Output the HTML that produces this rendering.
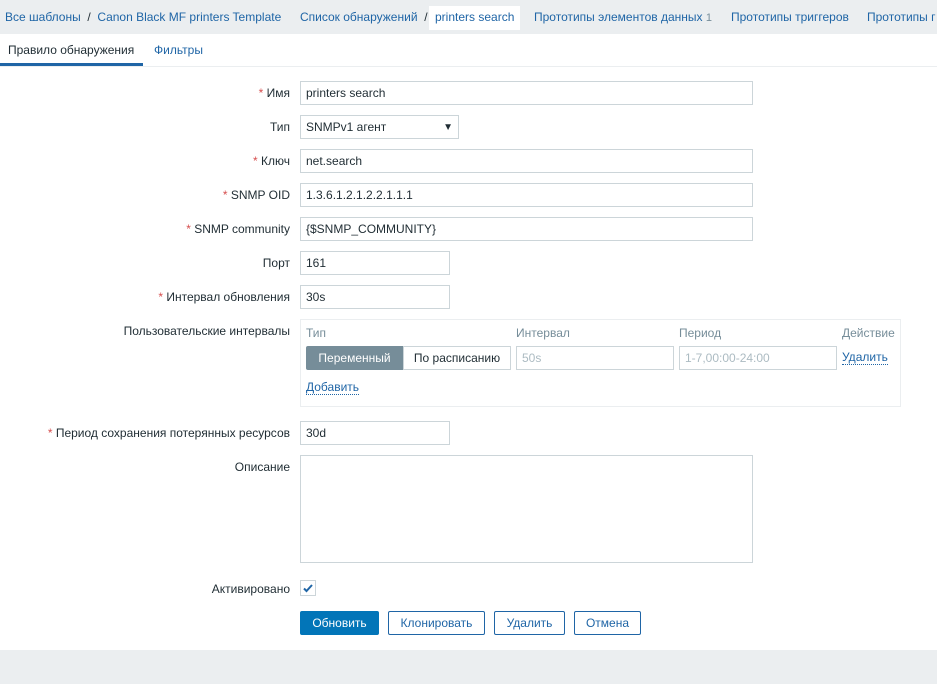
<!DOCTYPE html>
<html><head><meta charset="utf-8"><style>
*{box-sizing:border-box;margin:0;padding:0}
body{width:937px;height:684px;position:relative;background:#fff;font:12px "Liberation Sans",Arial,sans-serif;color:#1f2c33;overflow:hidden}
.a{position:absolute}
.top{left:0;top:0;width:937px;height:34px;background:#ebeef0;white-space:nowrap}
.top span{position:absolute;top:10px;color:#1f65a6}
.lnk{color:#1f65a6}
.lbl{position:absolute;right:647px;text-align:right;white-space:nowrap}
.st{color:#d64e4e}
.in{position:absolute;left:300px;height:24px;border:1px solid #ccd5d9;background:#fff;padding:4px 5px;white-space:nowrap}
.btn{position:absolute;top:611px;height:24px;border:1px solid #1f65a6;color:#1f65a6;text-align:center;line-height:22px;border-radius:2px;background:#fff}
.ul{border-bottom:1px dotted #1f65a6}
.gray{color:#768d99}
</style></head><body>
<div class="a top">
<span style="left:5px">Все шаблоны <span style="position:static;color:#1f2c33">&nbsp;/&nbsp;</span> Canon Black MF printers Template</span>
<span style="left:300px">Список обнаружений <span style="position:static;color:#1f2c33">&nbsp;/</span></span>
<div class="a" style="left:429px;top:6px;width:91px;height:24px;background:#fff"></div>
<span style="left:435px">printers search</span>
<span style="left:534px">Прототипы элементов данных <span style="position:static;color:#768d99;font-size:11px">1</span></span>
<span style="left:731px">Прототипы триггеров</span>
<span style="left:867px">Прототипы г</span>
</div>
<div class="a" style="left:0;top:66px;width:937px;height:1px;background:#ebeef0"></div>
<div class="a" style="left:8px;top:43px">Правило обнаружения</div>
<div class="a" style="left:0;top:63px;width:143px;height:3px;background:#1f65a6"></div>
<div class="a lnk" style="left:154px;top:43px">Фильтры</div>

<div class="lbl" style="top:86px"><span class="st">*</span> Имя</div>
<div class="in" style="top:81px;width:453px">printers search</div>
<div class="lbl" style="top:120px">Тип</div>
<div class="in" style="top:115px;width:159px">SNMPv1 агент<span class="a" style="right:5px;top:6px;font-size:10px">▼</span></div>
<div class="lbl" style="top:154px"><span class="st">*</span> Ключ</div>
<div class="in" style="top:149px;width:453px">net.search</div>
<div class="lbl" style="top:188px"><span class="st">*</span> SNMP OID</div>
<div class="in" style="top:183px;width:453px">1.3.6.1.2.1.2.2.1.1.1</div>
<div class="lbl" style="top:222px"><span class="st">*</span> SNMP community</div>
<div class="in" style="top:217px;width:453px">{$SNMP_COMMUNITY}</div>
<div class="lbl" style="top:256px">Порт</div>
<div class="in" style="top:251px;width:150px">161</div>
<div class="lbl" style="top:290px"><span class="st">*</span> Интервал обновления</div>
<div class="in" style="top:285px;width:150px">30s</div>
<div class="lbl" style="top:324px">Пользовательские интервалы</div>
<div class="a" style="left:300px;top:319px;width:601px;height:88px;border:1px solid #ebeef0"></div>
<div class="a gray" style="left:306px;top:326px">Тип</div>
<div class="a gray" style="left:516px;top:326px">Интервал</div>
<div class="a gray" style="left:679px;top:326px">Период</div>
<div class="a gray" style="left:842px;top:326px">Действие</div>
<div class="a" style="left:306px;top:346px;width:97px;height:24px;background:#768d99;color:#fff;text-align:center;line-height:24px;border-radius:2px 0 0 2px">Переменный</div>
<div class="a" style="left:403px;top:346px;width:108px;height:24px;border:1px solid #ccd5d9;text-align:center;line-height:22px">По расписанию</div>
<div class="in gray" style="left:516px;top:346px;width:158px;color:#acbbc2">50s</div>
<div class="in" style="left:679px;top:346px;width:158px;color:#acbbc2">1-7,00:00-24:00</div>
<div class="a lnk ul" style="left:842px;top:351px;line-height:13px">Удалить</div>
<div class="a lnk ul" style="left:306px;top:381px;line-height:13px">Добавить</div>
<div class="lbl" style="top:426px"><span class="st">*</span> Период сохранения потерянных ресурсов</div>
<div class="in" style="top:421px;width:150px">30d</div>
<div class="lbl" style="top:460px">Описание</div>
<div class="in" style="top:455px;width:453px;height:108px"></div>
<div class="lbl" style="top:582px">Активировано</div>
<div class="a" style="left:300px;top:580px;width:16px;height:16px;border:1px solid #ccd5d9"><svg width="14" height="14" style="position:absolute;left:0;top:0"><path d="M3 7.5l2.5 2.5L11 4" stroke="#1f65a6" stroke-width="2" fill="none"/></svg></div>
<div class="btn" style="left:300px;width:79px;background:#0275b8;border-color:#0275b8;color:#fff">Обновить</div>
<div class="btn" style="left:388px;width:97px">Клонировать</div>
<div class="btn" style="left:494px;width:71px">Удалить</div>
<div class="btn" style="left:574px;width:67px">Отмена</div>
<div class="a" style="left:0;top:650px;width:937px;height:34px;background:#ebeef0"></div>
</body></html>
